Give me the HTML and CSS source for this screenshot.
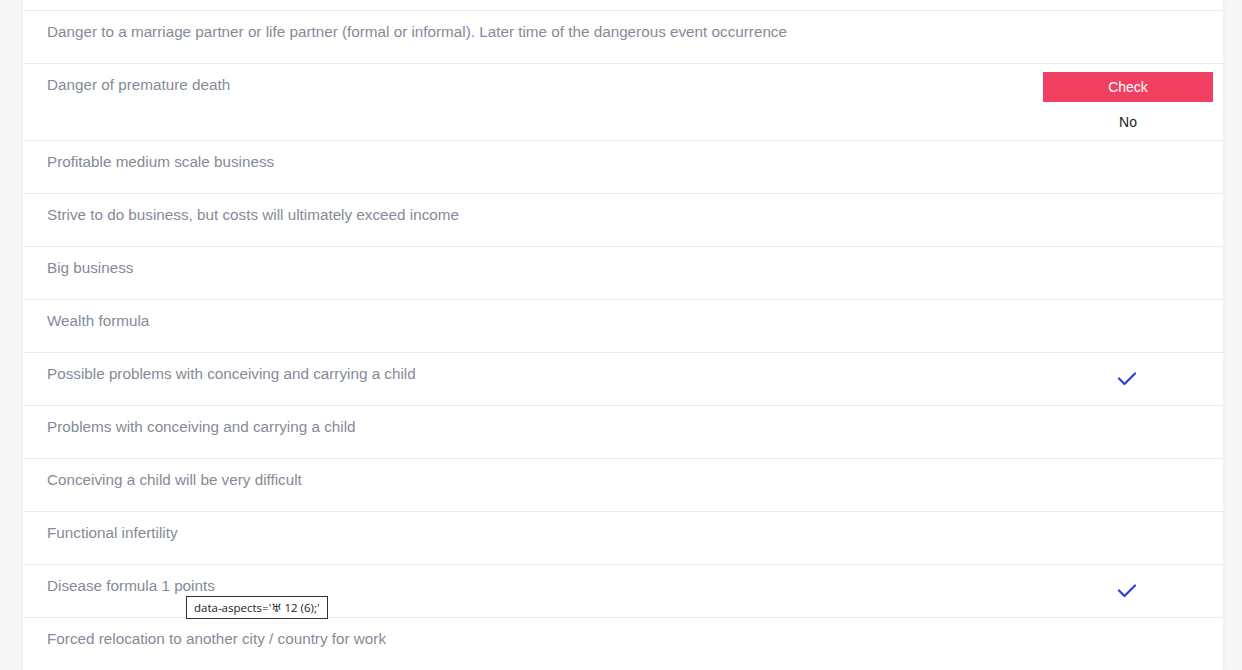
FILE: index.html
```html
<!DOCTYPE html>
<html lang="en">
<head>
<meta charset="utf-8">
<title>Aspects</title>
<link rel="stylesheet" href="styles.css">
</head>
<body>
<div class="card">
  <div class="row"><div class="label">Danger to a marriage partner or life partner (formal or informal). Later time of the dangerous event occurrence</div><div class="cell"></div></div>
  <div class="row"><div class="label">Danger of premature death</div><div class="cell cell-top"><button class="btn-check">Check</button><span class="answer">No</span></div></div>
  <div class="row"><div class="label">Profitable medium scale business</div><div class="cell"></div></div>
  <div class="row"><div class="label">Strive to do business, but costs will ultimately exceed income</div><div class="cell"></div></div>
  <div class="row"><div class="label">Big business</div><div class="cell"></div></div>
  <div class="row"><div class="label">Wealth formula</div><div class="cell"></div></div>
  <div class="row"><div class="label">Possible problems with conceiving and carrying a child</div><div class="cell"><svg class="tick" width="20" height="14" viewBox="0 0 20 14"><path d="M2 6.5 L7.5 12 L18 1.5" fill="none" stroke="#2b3fd4" stroke-width="2.2" stroke-linecap="round" stroke-linejoin="round"/></svg></div></div>
  <div class="row"><div class="label">Problems with conceiving and carrying a child</div><div class="cell"></div></div>
  <div class="row"><div class="label">Conceiving a child will be very difficult</div><div class="cell"></div></div>
  <div class="row"><div class="label">Functional infertility</div><div class="cell"></div></div>
  <div class="row row-tip"><div class="label">Disease formula 1 points</div><div class="cell"><svg class="tick" width="20" height="14" viewBox="0 0 20 14"><path d="M2 6.5 L7.5 12 L18 1.5" fill="none" stroke="#2b3fd4" stroke-width="2.2" stroke-linecap="round" stroke-linejoin="round"/></svg></div><div class="tooltip">data-aspects='♅ 12 (6);'</div></div>
  <div class="row"><div class="label">Forced relocation to another city / country for work</div><div class="cell"></div></div>
</div>
</body>
</html>
```
FILE: styles.css
```css
html, body {
  margin: 0;
  padding: 0;
  background: #f7f7f7;
  height: 670px;
  overflow: hidden;
}
.card {
  margin-left: 23px;
  width: 1200px;
  background: #fff;
  padding-top: 10px;
  box-shadow: 0 0 6px rgba(0,0,0,0.05);
  font-family: "Liberation Sans", Arial, sans-serif;
}
.row {
  display: grid;
  grid-template-columns: 1fr 190px;
  border-top: 1px solid #ececec;
  position: relative;
}
.label {
  padding: 11px 24px 21px 24px;
  font-size: 15.25px;
  line-height: 20px;
  color: #858a98;
}
.cell {
  display: flex;
  flex-direction: column;
  align-items: center;
  justify-content: center;
  padding: 0 10px;
}
.cell-top {
  justify-content: flex-start;
  padding: 8px 10px;
  gap: 10px;
}
.btn-check {
  width: 100%;
  height: 30px;
  border: 0;
  margin: 0;
  background: #ef4062;
  color: #fff;
  font-family: "Liberation Sans", Arial, sans-serif;
  font-size: 14px;
}
.answer {
  font-size: 14px;
  line-height: 20px;
  color: #222;
}
.tick {
  display: block;
  margin-left: -2px;
}
.tooltip {
  position: absolute;
  left: 163px;
  top: 31px;
  background: #fff;
  border: 1px solid #333;
  padding: 3px 7px 3px 7px;
  font-family: "Open Sans", "Noto Sans", "DejaVu Sans", sans-serif;
  font-size: 11.5px;
  line-height: 15px;
  color: #222;
  white-space: nowrap;
  z-index: 2;
}
```
